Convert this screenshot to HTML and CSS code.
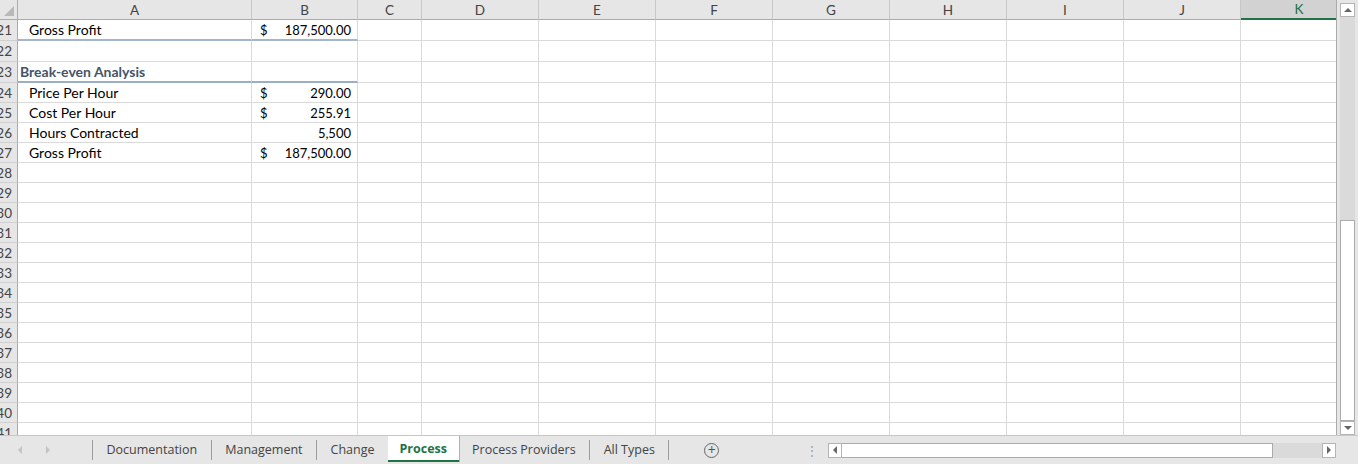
FILE: index.html
```html
<!DOCTYPE html>
<html lang="en">
<head>
  <meta charset="UTF-8">
  <meta name="viewport" content="width=device-width, initial-scale=1.0">
  <title>Process - Workbook</title>
  <link rel="stylesheet" href="styles.css">
</head>
<body>
  <div class="window">
    <div class="sheet">
      <div class="grid-area">
        <div class="grid" id="grid">
          <div class="cell corner"></div>
          <div class="cell col-head">A</div>
          <div class="cell col-head">B</div>
          <div class="cell col-head">C</div>
          <div class="cell col-head">D</div>
          <div class="cell col-head">E</div>
          <div class="cell col-head">F</div>
          <div class="cell col-head">G</div>
          <div class="cell col-head">H</div>
          <div class="cell col-head">I</div>
          <div class="cell col-head">J</div>
          <div class="cell col-head selected">K</div>
        </div>
      </div>

      <!-- vertical scrollbar -->
      <div class="vscroll">
        <div class="sbtn"><span class="tri-up"></span></div>
        <div class="vtrack"><div class="vthumb"></div></div>
        <div class="sbtn"><span class="tri-down"></span></div>
      </div>
    </div>

    <div class="tabbar">
      <div class="tab-nav">
        <span class="tri-left light"></span>
        <span class="tri-right light"></span>
      </div>
      <span class="sep"></span>
      <div class="tab">Documentation</div>
      <span class="sep"></span>
      <div class="tab">Management</div>
      <span class="sep"></span>
      <div class="tab">Change</div>
      <div class="tab active">Process</div>
      <div class="tab">Process Providers</div>
      <span class="sep"></span>
      <div class="tab">All Types</div>
      <span class="sep"></span>
      <div class="add-sheet">+</div>
      <div class="dots">&#8942;</div>
      <div class="hscroll">
        <div class="sbtn"><span class="tri-left"></span></div>
        <div class="hthumb"></div>
        <div class="htrack"></div>
        <div class="sbtn"><span class="tri-right"></span></div>
      </div>
    </div>
  </div>

<script>
  const grid = document.getElementById('grid');

  // rows 21-27 hold the data, the rest are blank
  const data = {
    21: { a: 'Gross Profit', dollar: true, b: '187,500.00', line: 'total' },
    23: { a: 'Break-even Analysis', heading: true, line: 'heading' },
    24: { a: 'Price Per Hour', dollar: true, b: '290.00' },
    25: { a: 'Cost Per Hour', dollar: true, b: '255.91' },
    26: { a: 'Hours Contracted', b: '5,500' },
    27: { a: 'Gross Profit', dollar: true, b: '187,500.00' }
  };

  function cell(cls, text) {
    const div = document.createElement('div');
    div.className = 'cell ' + cls;
    if (text) div.textContent = text;
    grid.appendChild(div);
    return div;
  }

  for (let r = 21; r <= 41; r++) {
    const row = data[r] || {};
    cell('row-head', String(r));

    const a = cell(row.heading ? 'heading' : 'indent', row.a);
    const b = cell('money');
    if (row.b) {
      const sign = document.createElement('span');
      sign.textContent = row.dollar ? '$' : '';
      const num = document.createElement('span');
      num.textContent = row.b;
      b.appendChild(sign);
      b.appendChild(num);
    }
    if (row.line) {
      a.classList.add(row.line);
      b.classList.add(row.line);
    }

    for (let c = 0; c < 9; c++) cell('blank');
  }
</script>
</body>
</html>
```

FILE: styles.css
```css
* {
  box-sizing: border-box;
}

body {
  margin: 0;
  font-family: Lato, "Liberation Sans", sans-serif;
  background-color: #ffffff;
  overflow: hidden;
}

.window {
  width: 1358px;
  height: 464px;
  display: flex;
  flex-direction: column;
}

.sheet {
  display: flex;
  height: 435px;
}

.grid-area {
  width: 1337px;
  overflow: hidden;
  border-right: 1px solid #ababab;
}

.grid {
  display: grid;
  grid-template-columns: 18px 234px 106px 64px repeat(8, 117px);
  grid-template-rows: 20px 21px 21px 21px;
  grid-auto-rows: 20px;
}

.cell {
  display: flex;
  align-items: center;
  padding: 0 2px;
  border-right: 1px solid #dadada;
  border-bottom: 1px solid #dadada;
  font-size: 14px;
  color: #000000;
  white-space: nowrap;
  overflow: hidden;
}

.corner {
  position: relative;
  background-color: #e6e6e6;
  border-right-color: #ababab;
  border-bottom-color: #ababab;
}

.corner::after {
  content: "";
  position: absolute;
  right: 3px;
  bottom: 3px;
  width: 10px;
  height: 10px;
  background-color: #b8b8b8;
  clip-path: polygon(100% 0, 100% 100%, 0 100%);
}

.col-head {
  justify-content: center;
  background-color: #e6e6e6;
  color: #444444;
  font-size: 13.5px;
  border-right-color: #c8c8c8;
  border-bottom-color: #ababab;
}

.col-head.selected {
  background-color: #d2d2d2;
  color: #217346;
  border-bottom: 2px solid #217346;
}

.row-head {
  justify-content: flex-end;
  padding-right: 5px;
  background-color: #e6e6e6;
  color: #444444;
  font-size: 13.5px;
  border-right-color: #ababab;
  border-bottom-color: #d0d0d0;
}

.indent {
  padding-left: 11px;
}

.heading {
  color: #44546a;
  font-weight: bold;
}

.money {
  justify-content: space-between;
  padding: 0 6px 0 8px;
  font-size: 13px;
}

.total {
  border-bottom: 2px solid #a4b6c9;
}

.heading.heading,
.money.heading {
  border-bottom: 2px solid #9aaec5;
}

/* scrollbars */
.vscroll {
  width: 21px;
  display: flex;
  flex-direction: column;
  padding: 3px 3px 0 3px;
  background-color: #e6e6e6;
}

.sbtn {
  display: flex;
  align-items: center;
  justify-content: center;
  height: 14px;
  width: 15px;
  background-color: #ffffff;
  border: 1px solid #b4b4b4;
}

.vtrack {
  flex: 1;
  display: flex;
  flex-direction: column;
  justify-content: flex-end;
  background-color: #dadada;
}

.vthumb {
  height: 201px;
  background-color: #ffffff;
  border: 1px solid #ababab;
}

.tri-up,
.tri-down,
.tri-left,
.tri-right {
  width: 0;
  height: 0;
  border: 4px solid transparent;
}

.tri-up {
  border-bottom-color: #666666;
  margin-top: -4px;
}

.tri-down {
  border-top-color: #666666;
  margin-bottom: -4px;
}

.tri-left {
  border-right-color: #666666;
  border-width: 4px 4px 4px 0;
}

.tri-right {
  border-left-color: #666666;
  border-width: 4px 0 4px 4px;
}

.tri-left.light {
  border-right-color: #c4c4c4;
}

.tri-right.light {
  border-left-color: #c4c4c4;
}

/* sheet tabs */
.tabbar {
  height: 29px;
  display: flex;
  align-items: center;
  background-color: #e6e6e6;
  border-top: 1px solid #c6c6c6;
  font-family: "Open Sans", "Noto Sans", sans-serif;
  font-size: 12.5px;
  color: #444444;
}

.tab-nav {
  width: 92px;
  display: flex;
  align-items: center;
  gap: 24px;
  padding-left: 18px;
}

.sep {
  width: 1px;
  height: 20px;
  background-color: #9c9c9c;
}

.tab {
  padding: 0 13.5px;
  line-height: 26px;
}

.tab.active {
  align-self: flex-start;
  height: 26px;
  padding: 0 11.5px;
  background-color: #ffffff;
  color: #217346;
  font-weight: bold;
  border-bottom: 2px solid #217346;
  box-shadow: 1px 0 0 #b0b0b0;
}

.add-sheet {
  width: 15px;
  height: 15px;
  margin-left: 35px;
  border: 1px solid #666666;
  border-radius: 50%;
  display: flex;
  align-items: center;
  justify-content: center;
  font-size: 14px;
  line-height: 1;
  color: #555555;
}

.dots {
  width: 16px;
  margin-left: auto;
  margin-right: 8px;
  text-align: center;
  color: #a8a8a8;
  font-size: 14px;
}

.hscroll {
  width: 508px;
  height: 15px;
  margin-right: 22px;
  display: flex;
}

.hscroll .sbtn {
  height: 15px;
  width: 14px;
}

.hthumb {
  width: 431px;
  background-color: #ffffff;
  border: 1px solid #ababab;
  border-left: none;
}

.htrack {
  flex: 1;
  background-color: #dadada;
}
```
